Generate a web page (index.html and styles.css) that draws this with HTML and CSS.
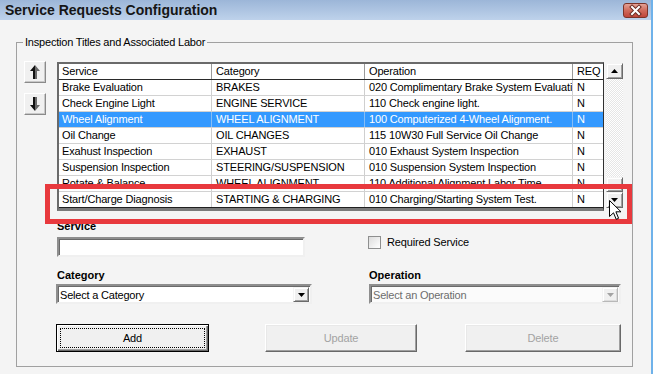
FILE: index.html
```html
<!DOCTYPE html>
<html>
<head>
<meta charset="utf-8">
<link rel="stylesheet" href="styles.css">
</head>
<body>
<div class="window">
  <div class="titlebar">
    <span class="title">Service Requests Configuration</span>
    <span class="close">
      <svg width="25" height="15" viewBox="0 0 25 15">
        <path d="M9 4 L16 11 M16 4 L9 11" stroke="#6b2b22" stroke-width="4" stroke-linecap="square"/>
        <path d="M9 4 L16 11 M16 4 L9 11" stroke="#ffffff" stroke-width="2" stroke-linecap="square"/>
      </svg>
    </span>
  </div>
  <div class="client">
    <div class="group">
      <div class="legend">Inspection Titles and Associated Labor</div>
      <div class="top">
        <div class="movers">
          <div class="mover">
            <svg width="20" height="20" viewBox="0 0 20 20">
              <polygon points="10,3 5,9 8,9 8,17 10,17" fill="#111"/>
              <polygon points="10,3 15,9 12,9 12,17 10,17" fill="#6a6a6a"/>
            </svg>
          </div>
          <div class="mover">
            <svg width="20" height="20" viewBox="0 0 20 20">
              <polygon points="10,17 5,11 8,11 8,3 10,3" fill="#111"/>
              <polygon points="10,17 15,11 12,11 12,3 10,3" fill="#6a6a6a"/>
            </svg>
          </div>
        </div>
        <div class="list">
          <div class="grid">
            <div class="row head"><span class="c c1">Service</span><span class="c">Category</span><span class="c">Operation</span><span class="c c4">REQ</span></div>
            <div class="row"><span class="c c1">Brake Evaluation</span><span class="c">BRAKES</span><span class="c">020 Complimentary Brake System Evaluation</span><span class="c c4">N</span></div>
            <div class="row"><span class="c c1">Check Engine Light</span><span class="c">ENGINE SERVICE</span><span class="c">110 Check engine light.</span><span class="c c4">N</span></div>
            <div class="row sel"><span class="c c1">Wheel Alignment</span><span class="c">WHEEL ALIGNMENT</span><span class="c">100 Computerized 4-Wheel Alignment.</span><span class="c c4">N</span></div>
            <div class="row"><span class="c c1">Oil Change</span><span class="c">OIL CHANGES</span><span class="c">115 10W30 Full Service Oil Change</span><span class="c c4">N</span></div>
            <div class="row"><span class="c c1">Exahust Inspection</span><span class="c">EXHAUST</span><span class="c">010 Exhaust System Inspection</span><span class="c c4">N</span></div>
            <div class="row"><span class="c c1">Suspension Inspection</span><span class="c">STEERING/SUSPENSION</span><span class="c">010 Suspension System Inspection</span><span class="c c4">N</span></div>
            <div class="row"><span class="c c1">Rotate &amp; Balance</span><span class="c">WHEEL ALIGNMENT</span><span class="c">110 Additional Alignment Labor Time</span><span class="c c4">N</span></div>
            <div class="row last"><span class="c c1">Start/Charge Diagnosis</span><span class="c">STARTING &amp; CHARGING</span><span class="c">010 Charging/Starting System Test.</span><span class="c c4">N</span></div>
          </div>
          <div class="vscroll">
            <div class="sbtn">
              <svg width="7" height="4" viewBox="0 0 7 4"><polygon points="3.5,0 7,4 0,4" fill="#000"/></svg>
            </div>
            <div class="track"></div>
            <div class="thumb"></div>
            <div class="sbtn">
              <svg width="7" height="4" viewBox="0 0 7 4"><polygon points="0,0 7,0 3.5,4" fill="#000"/></svg>
            </div>
          </div>
        </div>
      </div>
      <div class="form">
        <div class="lbl">Service</div>
        <div></div>
        <div class="textbox"></div>
        <div class="check"><span class="chk"></span><span>Required Service</span></div>
        <div class="lbl lbl2">Category</div>
        <div class="lbl lbl2">Operation</div>
        <div class="combo cat">
          <span class="ctext">Select a Category</span>
          <span class="dd"><svg width="7" height="4" viewBox="0 0 7 4"><polygon points="0,0 7,0 3.5,4" fill="#000"/></svg></span>
        </div>
        <div class="combo op disabled">
          <span class="ctext">Select an Operation</span>
          <span class="dd"><svg width="7" height="4" viewBox="0 0 7 4"><polygon points="0,0 7,0 3.5,4" fill="#a3a3a3"/></svg></span>
        </div>
      </div>
      <div class="buttons">
        <div class="btn add"><span class="focus">Add</span></div>
        <div class="btn upd dis">Update</div>
        <div class="btn del dis">Delete</div>
      </div>
    </div>
  </div>
  <div class="highlight"></div>
  <svg class="cursor" width="13" height="21" viewBox="0 0 13 21">
    <path d="M0.5 0.5 L0.5 16.5 L4.5 12.8 L7.2 19.3 L9.6 18.3 L6.9 11.8 L12 11.8 Z" fill="#fff" stroke="#000" stroke-width="1"/>
  </svg>
</div>
</body>
</html>
```

FILE: styles.css
```css
* { box-sizing: border-box; }
html, body { margin: 0; padding: 0; }
body {
  width: 653px;
  height: 374px;
  overflow: hidden;
  background: #f4f4f4;
  font-family: "Liberation Sans", Arial, sans-serif;
  font-size: 11px;
  letter-spacing: -0.15px;
  color: #000;
}
.window {
  position: relative;
  width: 653px;
  height: 374px;
  border-right: 2px solid #6fb2ea;
  overflow: hidden;
}
.titlebar {
  height: 20px;
  display: flex;
  align-items: center;
  justify-content: space-between;
  padding: 0 3px 0 5px;
  background: linear-gradient(#9cb6d8, #bed2eb);
}
.title {
  font-size: 14px;
  font-weight: bold;
  letter-spacing: 0;
  color: #161616;
  line-height: 20px;
}
.close {
  width: 25px;
  height: 15px;
  border: 1px solid #7c3328;
  border-radius: 3px;
  background: linear-gradient(#e4a296, #cf6a5b 50%, #c0463a);
  display: flex;
  align-items: center;
  justify-content: center;
  overflow: hidden;
}
.close svg { display: block; margin: -1px; }
.client {
  height: 354px;
  padding: 22px 0 0 16px;
  background: #f4f4f4;
}
.group {
  width: 617px;
  height: 325px;
  border: 1px solid #a0a0a0;
}
.legend {
  width: fit-content;
  margin: -8px 0 0 6px;
  padding: 0 2px;
  height: 14px;
  line-height: 14px;
  letter-spacing: -0.2px;
  background: #f4f4f4;
}
.top {
  display: flex;
  align-items: flex-start;
  margin-top: 12px;
}
.movers {
  margin-left: 7px;
  width: 22px;
  display: flex;
  flex-direction: column;
  gap: 10px;
}
.mover {
  width: 22px;
  height: 22px;
  background: #f0f0f0;
  border: 1px solid;
  border-color: #ffffff #8a8a8a #8a8a8a #ffffff;
  box-shadow: inset -1px -1px #c8c8c8;
  display: flex;
  align-items: center;
  justify-content: center;
}
.mover svg { display: block; }
.list {
  display: flex;
  align-items: flex-start;
  margin-left: 11px;
  margin-top: 1px;
}
.grid {
  width: 547px;
  background: #fff;
  border-top: 2px solid #6a6a6a;
  border-left: 2px solid #6a6a6a;
  border-right: 1px solid #303030;
  border-bottom: 3px solid #7a7a7a;
}
.row {
  display: grid;
  grid-template-columns: 153px 153px 208px 30px;
  height: 16px;
  border-bottom: 1px solid #d2d2d2;
}
.row.head { border-bottom: 1px solid #2a2a2a; }
.row.last { border-bottom: 1px solid #202020; }
.c {
  display: block;
  line-height: 15px;
  padding-left: 4px;
  white-space: nowrap;
  overflow: hidden;
  border-right: 1px solid #cfcfcf;
}
.c1 { padding-left: 3px; }
.c4 { border-right: none; }
.head .c { border-right-color: #9a9a9a; }
.head .c4 { border-right: none; }
.row.sel { background: #3399ff; color: #fff; }
.row.sel .c { border-right-color: #86bdf5; }
.row.sel .c4 { border-right: none; }
.vscroll {
  width: 17px;
  height: 145px;
  margin: 1px 0 0 2px;
  display: flex;
  flex-direction: column;
  background: repeating-conic-gradient(#ffffff 0 25%, #e6e6e6 0 50%) 0 0 / 2px 2px;
}
.sbtn, .thumb {
  background: #f0f0f0;
  border: 1px solid;
  border-color: #f4f4f4 #6a6a6a #6a6a6a #f4f4f4;
  box-shadow: inset 1px 1px #ffffff, inset -1px -1px #a0a0a0;
}
.sbtn {
  height: 16px;
  display: flex;
  align-items: center;
  justify-content: center;
}
.sbtn svg { display: block; }
.track { flex: 1; }
.thumb { height: 15px; }
.form {
  display: grid;
  grid-template-columns: 312px 252px;
  margin: 9px 0 0 40px;
}
.lbl {
  font-weight: bold;
  letter-spacing: 0;
  line-height: 13px;
  height: 13px;
}
.lbl2 { margin-top: 12px; }
.textbox {
  width: 248px;
  height: 20px;
  margin-top: 4px;
  background: #fff;
  border: 2px solid;
  border-color: #8e8e8e #f0f0f0 #f0f0f0 #8e8e8e;
  box-shadow: inset 1px 1px #6a6a6a;
}
.check {
  display: flex;
  align-items: center;
  gap: 6px;
  margin: 3px 0 0 -1px;
  height: 13px;
  line-height: 13px;
}
.chk {
  width: 13px;
  height: 13px;
  border: 1px solid #8e8f8f;
  background: linear-gradient(135deg, #dcdcdc, #ffffff);
}
.combo {
  height: 20px;
  margin-top: 2px;
  display: flex;
  align-items: center;
  justify-content: space-between;
  background: #fff;
  border: 2px solid;
  border-color: #8e8e8e #f0f0f0 #f0f0f0 #8e8e8e;
  box-shadow: inset 1px 1px #6a6a6a;
  padding: 0 1px 0 2px;
}
.combo.cat { width: 256px; margin-left: -1px; }
.combo.op { width: 252px; background: #fbfbfb; }
.ctext { letter-spacing: -0.2px; line-height: 16px; padding-top: 1px; }
.disabled .ctext { color: #6d6d6d; }
.dd {
  width: 16px;
  height: 15px;
  background: #f0f0f0;
  border: 1px solid;
  border-color: #f4f4f4 #6a6a6a #6a6a6a #f4f4f4;
  box-shadow: inset 1px 1px #ffffff, inset -1px -1px #a0a0a0;
  display: flex;
  align-items: center;
  justify-content: center;
  margin-top: 1px;
}
.disabled .dd {
  border-color: #f4f4f4 #b8b8b8 #b8b8b8 #f4f4f4;
  box-shadow: inset 1px 1px #ffffff, inset -1px -1px #dcdcdc;
}
.dd svg { display: block; }
.buttons {
  display: flex;
  margin-top: 20px;
  padding-left: 39px;
}
.btn {
  height: 28px;
  display: flex;
  align-items: center;
  justify-content: center;
  background: #f0f0f0;
}
.btn.add {
  width: 153px;
  border: 1px solid #000;
  box-shadow: inset 1px 1px #ffffff, inset -1px -1px #696969, inset -2px -2px #a0a0a0;
  padding: 3px;
}
.focus {
  flex: 1;
  align-self: stretch;
  display: flex;
  align-items: center;
  justify-content: center;
  border: 1px dotted #000;
}
.btn.dis {
  color: #a3a3a3;
  border: 1px solid;
  border-color: #ffffff #696969 #696969 #ffffff;
  box-shadow: inset -1px -1px #a0a0a0, inset 1px 1px #e8e8e8;
}
.btn.upd { width: 152px; margin-left: 56px; }
.btn.del { width: 156px; margin-left: 48px; }
.highlight {
  position: absolute;
  left: 45px;
  top: 184px;
  width: 587px;
  height: 40px;
  border: 5px solid #e8393d;
}
.cursor {
  position: absolute;
  left: 609px;
  top: 200px;
}
```
